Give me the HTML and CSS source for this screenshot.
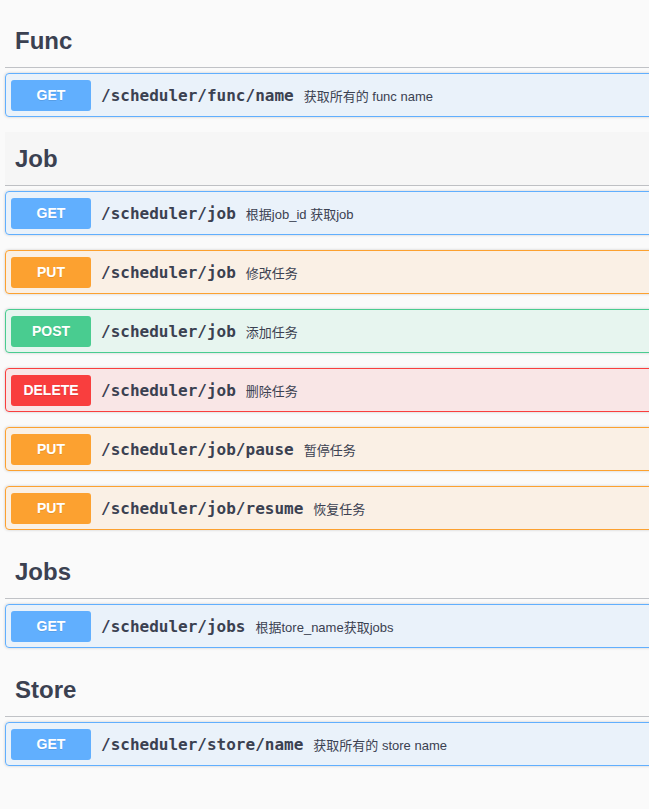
FILE: index.html
```html
<!DOCTYPE html>
<html lang="zh">
<head>
<meta charset="utf-8">
<title>Scheduler API</title>
<link rel="stylesheet" href="styles.css">
</head>
<body>
<div class="wrapper">
  <section class="tag-section">
    <h3 class="tag">Func</h3>
    <div class="opblock get"><span class="method">GET</span><span class="path">/scheduler/func/name</span><span class="desc">获取所有的 func name</span></div>
  </section>
  <section class="tag-section">
    <h3 class="tag hover">Job</h3>
    <div class="opblock get"><span class="method">GET</span><span class="path">/scheduler/job</span><span class="desc">根据job_id 获取job</span></div>
    <div class="opblock put"><span class="method">PUT</span><span class="path">/scheduler/job</span><span class="desc">修改任务</span></div>
    <div class="opblock post"><span class="method">POST</span><span class="path">/scheduler/job</span><span class="desc">添加任务</span></div>
    <div class="opblock delete"><span class="method">DELETE</span><span class="path">/scheduler/job</span><span class="desc">删除任务</span></div>
    <div class="opblock put"><span class="method">PUT</span><span class="path">/scheduler/job/pause</span><span class="desc">暂停任务</span></div>
    <div class="opblock put"><span class="method">PUT</span><span class="path">/scheduler/job/resume</span><span class="desc">恢复任务</span></div>
  </section>
  <section class="tag-section">
    <h3 class="tag">Jobs</h3>
    <div class="opblock get"><span class="method">GET</span><span class="path">/scheduler/jobs</span><span class="desc">根据tore_name获取jobs</span></div>
  </section>
  <section class="tag-section">
    <h3 class="tag">Store</h3>
    <div class="opblock get"><span class="method">GET</span><span class="path">/scheduler/store/name</span><span class="desc">获取所有的 store name</span></div>
  </section>
</div>
</body>
</html>
```
FILE: styles.css
```css
html, body {
  margin: 0;
  padding: 0;
  background: #fafafa;
  overflow: hidden;
}

.wrapper {
  width: 700px;
  padding: 14px 0 0 5px;
  font-family: "Liberation Sans", "Noto Sans CJK SC", sans-serif;
  color: #3b4151;
}

.tag {
  display: flex;
  align-items: center;
  box-sizing: border-box;
  height: 54px;
  margin: 0 0 5px;
  padding: 0 10px;
  border-bottom: 1px solid rgba(59, 65, 81, 0.3);
  font-size: 24px;
  font-weight: 700;
  color: #3b4151;
}

.tag.hover {
  background: rgba(0, 0, 0, 0.015);
}

.opblock {
  display: flex;
  align-items: center;
  height: 32px;
  margin: 0 0 15px;
  padding: 5px;
  border: 1px solid;
  border-radius: 4px;
  box-shadow: 0 0 3px rgba(0, 0, 0, 0.19);
}

.method {
  display: flex;
  align-items: center;
  justify-content: center;
  width: 80px;
  height: 31px;
  flex: none;
  border-radius: 3px;
  font-family: "Liberation Sans", sans-serif;
  font-size: 14px;
  font-weight: 700;
  color: #fff;
  text-shadow: 0 1px 0 rgba(0, 0, 0, 0.1);
}

.path {
  padding: 0 10px;
  font-family: "DejaVu Sans Mono", monospace;
  font-size: 16px;
  font-weight: 700;
  color: #3b4151;
}

.desc {
  font-size: 13px;
  color: #3b4151;
}

.get { background: rgba(97, 175, 254, 0.1); border-color: #61affe; }
.get .method { background: #61affe; }
.put { background: rgba(252, 161, 48, 0.1); border-color: #fca130; }
.put .method { background: #fca130; }
.post { background: rgba(73, 204, 144, 0.1); border-color: #49cc90; }
.post .method { background: #49cc90; }
.delete { background: rgba(249, 62, 62, 0.1); border-color: #f93e3e; }
.delete .method { background: #f93e3e; }
```
